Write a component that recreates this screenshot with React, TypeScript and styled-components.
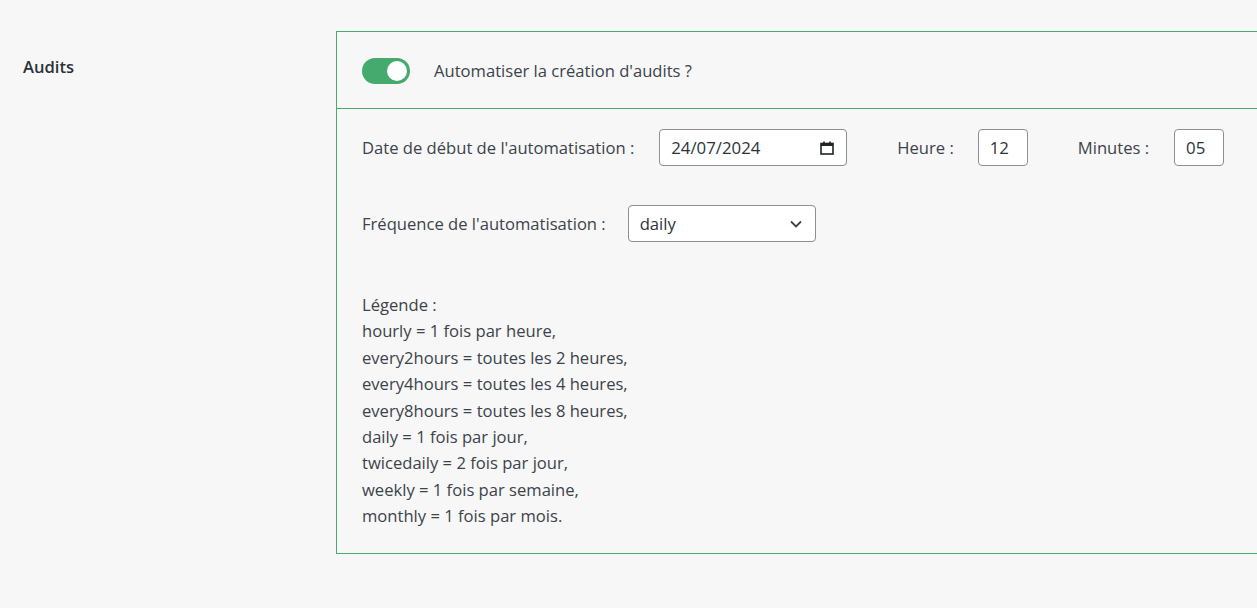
import React, { useState } from "react";
import styled, { createGlobalStyle } from "styled-components";

const Global = createGlobalStyle`
  html, body { margin: 0; padding: 0; }
  body {
    background: #f7f7f7;
    font-family: "Open Sans", "Noto Sans", "Liberation Sans", sans-serif;
    color: #3c434a;
    overflow: hidden;
  }
`;

const Page = styled.div`
  display: flex;
  align-items: flex-start;
  padding-top: 31px;
  width: 1257px;
  height: 608px;
  box-sizing: border-box;
`;

const SideLabel = styled.div`
  width: 336px;
  box-sizing: border-box;
  padding: 26px 0 0 23px;
  font-size: 16.6px;
  font-weight: 600;
  color: #2c3338;
  line-height: 20px;
`;

const Panel = styled.div`
  flex: 1;
  border: 1px solid #4aa96c;
  border-right: none;
`;

const Header = styled.div`
  display: flex;
  align-items: center;
  gap: 24px;
  height: 77px;
  padding: 1px 25px 0 25px;
  box-sizing: border-box;
  border-bottom: 1px solid #4aa96c;
  font-size: 16.6px;
`;

const Switch = styled.button<{ $on: boolean }>`
  width: 48px;
  height: 26px;
  border-radius: 13px;
  border: none;
  padding: 3px;
  box-sizing: border-box;
  background: ${(p) => (p.$on ? "#45aa6d" : "#b4b9be")};
  display: flex;
  justify-content: ${(p) => (p.$on ? "flex-end" : "flex-start")};
  cursor: pointer;
`;

const Knob = styled.span`
  width: 20px;
  height: 20px;
  border-radius: 50%;
  background: #ffffff;
`;

const Body = styled.div`
  padding: 20px 25px 23px 25px;
  display: flex;
  flex-direction: column;
  font-size: 16.6px;
`;

const Row = styled.div<{ $mt?: number }>`
  display: flex;
  align-items: center;
  margin-top: ${(p) => p.$mt ?? 0}px;
`;

const Label = styled.label<{ $gap: number; $ml?: number }>`
  margin-right: ${(p) => p.$gap}px;
  margin-left: ${(p) => p.$ml ?? 0}px;
  white-space: nowrap;
`;

const Field = styled.div<{ $w: number }>`
  width: ${(p) => p.$w}px;
  height: 37px;
  box-sizing: border-box;
  border: 1px solid #8c8f94;
  border-radius: 4px;
  background: #ffffff;
  display: flex;
  align-items: center;
  padding: 0 11px 0 11px;
  gap: 6px;
`;

const FieldInput = styled.input`
  flex: 1;
  min-width: 0;
  border: none;
  outline: none;
  background: transparent;
  font: inherit;
  font-size: 16.8px;
  color: #2c3338;
  padding: 0;
`;

const SelectBox = styled.select`
  flex: 1;
  min-width: 0;
  appearance: none;
  border: none;
  outline: none;
  background: transparent;
  font: inherit;
  font-size: 16.6px;
  color: #2c3338;
  padding: 0;
`;

const Legend = styled.div`
  margin-top: 50px;
  line-height: 26.4px;
`;

const CalendarIcon = () => (
  <svg width="16" height="16" viewBox="0 0 16 16" fill="none">
    <rect x="2" y="3.5" width="12" height="10.5" stroke="#1d2327" strokeWidth="1.6" />
    <rect x="2" y="3.5" width="12" height="2.5" fill="#1d2327" />
    <line x1="5" y1="1.5" x2="5" y2="4" stroke="#1d2327" strokeWidth="1.6" />
    <line x1="11" y1="1.5" x2="11" y2="4" stroke="#1d2327" strokeWidth="1.6" />
  </svg>
);

const ChevronIcon = () => (
  <svg width="16" height="16" viewBox="0 0 16 16" fill="none">
    <path d="M3 5.5 L8 10.5 L13 5.5" stroke="#3c434a" strokeWidth="1.8" fill="none" />
  </svg>
);

const legend = [
  "Légende :",
  "hourly = 1 fois par heure,",
  "every2hours = toutes les 2 heures,",
  "every4hours = toutes les 4 heures,",
  "every8hours = toutes les 8 heures,",
  "daily = 1 fois par jour,",
  "twicedaily = 2 fois par jour,",
  "weekly = 1 fois par semaine,",
  "monthly = 1 fois par mois.",
];

export default function App() {
  const [on, setOn] = useState(true);
  return (
    <>
      <Global />
      <Page>
        <SideLabel>Audits</SideLabel>
        <Panel>
          <Header>
            <Switch $on={on} onClick={() => setOn(!on)} aria-pressed={on}>
              <Knob />
            </Switch>
            <span>Automatiser la création d'audits ?</span>
          </Header>
          <Body>
            <Row>
              <Label $gap={25}>Date de début de l'automatisation :</Label>
              <Field $w={188}>
                <FieldInput defaultValue="24/07/2024" readOnly />
                <CalendarIcon />
              </Field>
              <Label $gap={24} $ml={50}>Heure :</Label>
              <Field $w={50}>
                <FieldInput defaultValue="12" />
              </Field>
              <Label $gap={25} $ml={50}>Minutes :</Label>
              <Field $w={50}>
                <FieldInput defaultValue="05" />
              </Field>
            </Row>
            <Row $mt={39}>
              <Label $gap={22}>Fréquence de l'automatisation :</Label>
              <Field $w={188}>
                <SelectBox defaultValue="daily">
                  <option value="hourly">hourly</option>
                  <option value="every2hours">every2hours</option>
                  <option value="every4hours">every4hours</option>
                  <option value="every8hours">every8hours</option>
                  <option value="daily">daily</option>
                  <option value="twicedaily">twicedaily</option>
                  <option value="weekly">weekly</option>
                  <option value="monthly">monthly</option>
                </SelectBox>
                <ChevronIcon />
              </Field>
            </Row>
            <Legend>
              {legend.map((l) => (
                <div key={l}>{l}</div>
              ))}
            </Legend>
          </Body>
        </Panel>
      </Page>
    </>
  );
}
